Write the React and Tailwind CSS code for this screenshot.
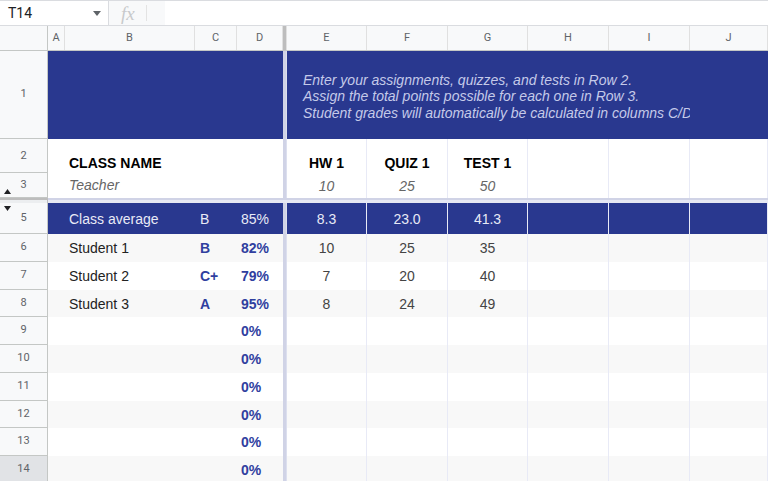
import React from "react";

const cols = "grid grid-cols-[48px_17px_130px_42px_46px_4px_80px_81px_80px_81px_81px_78px]";
const letters = ["A", "B", "C", "D", "", "E", "F", "G", "H", "I", "J"];

const students = [
    { num: 6, h: "h-[28px]", band: true, name: "Student 1", grade: "B", pct: "82%", hw: "10", quiz: "25", test: "35" },
    { num: 7, h: "h-[28px]", band: false, name: "Student 2", grade: "C+", pct: "79%", hw: "7", quiz: "20", test: "40" },
    { num: 8, h: "h-[27px]", band: true, name: "Student 3", grade: "A", pct: "95%", hw: "8", quiz: "24", test: "49" },
    { num: 9, h: "h-[28px]", band: false, name: "", grade: "", pct: "0%" },
    { num: 10, h: "h-[28px]", band: true, name: "", grade: "", pct: "0%" },
    { num: 11, h: "h-[28px]", band: false, name: "", grade: "", pct: "0%" },
    { num: 12, h: "h-[27px]", band: true, name: "", grade: "", pct: "0%" },
    { num: 13, h: "h-[28px]", band: false, name: "", grade: "", pct: "0%" },
    { num: 14, h: "h-[28px]", band: true, name: "", grade: "", pct: "0%", selected: true },
];

function RowHead({ children, selected, extra = "" }) {
    return (
        <div
            className={`relative flex items-center justify-center border-r border-b border-[#c4c7c5] text-[11px] text-[#5f6368] font-['Roboto',sans-serif] ${selected ? "bg-[#e1e3e6]" : "bg-[#f8f9fa]"} ${extra}`}
        >
            {children}
        </div>
    );
}

function Freeze() {
    return <div className="border-l-[3px] border-[#d0d3e6] bg-[#dcdfee]" />;
}

function GridCell({ children, className = "" }) {
    return (
        <div className={`flex items-center justify-center border-r border-[#e8eaf6] pt-px ${className}`}>
            {children}
        </div>
    );
}

function App() {
    return (
        <div className="w-[768px] h-[481px] overflow-hidden bg-white font-['Liberation_Sans',Arial,sans-serif]">
            {/* name box + formula bar */}
            <div className="flex h-[26px] items-center border-t border-b border-[#dadce0]">
                <div className="flex w-[108px] items-center justify-between pl-2 pr-[7px]">
                    <span className="text-[14px] text-[#202124] font-['Roboto',sans-serif]">T14</span>
                    <svg width="8" height="5" viewBox="0 0 8 5">
                        <polygon points="0,0 8,0 4,5" fill="#5f6368" />
                    </svg>
                </div>
                <div className="flex h-[24px] w-[57px] items-center border-l border-[#dadce0] bg-[#f8f9fa]">
                    <span className="ml-[12px] font-['Liberation_Serif',serif] text-[19px] italic leading-none text-[#c8cacc]">fx</span>
                    <div className="ml-[11px] h-[16px] w-px bg-[#e3e3e3]" />
                </div>
            </div>

            {/* column letters */}
            <div className={`${cols} h-[25px] border-b border-[#c4c7c5] bg-[#f8f9fa] text-[11px] text-[#5f6368] font-['Roboto',sans-serif]`}>
                <div className="border-r border-[#c4c7c5]" />
                {letters.map((l, i) =>
                    i === 4 ? (
                        <div key={i} className="border-r border-[#e0e0e0] bg-[#bdbdbd]" />
                    ) : (
                        <div key={i} className="flex items-center justify-center border-r border-[#e0e0e0]">
                            {l}
                        </div>
                    )
                )}
            </div>

            {/* row 1 */}
            <div className={`${cols} h-[88px]`}>
                <RowHead>1</RowHead>
                <div className="col-span-4 bg-[#29388f]" />
                <Freeze />
                <div className="col-span-5 flex flex-col justify-center overflow-hidden whitespace-nowrap bg-[#29388f] pl-4 pt-[3px] text-[14px] italic leading-[16.5px] text-[#c5cae9]">
                    <span>Enter your assignments, quizzes, and tests in Row 2.</span>
                    <span>Assign the total points possible for each one in Row 3.</span>
                    <span>Student grades will automatically be calculated in columns C/D.</span>
                </div>
                <div className="bg-[#29388f]" />
            </div>

            {/* row 2 */}
            <div className={`${cols} h-[34px] text-[14px] leading-[16px]`}>
                <RowHead>2</RowHead>
                <div />
                <div className="col-span-3 flex items-end pb-[2px] pl-1 font-bold text-[#000]">CLASS NAME</div>
                <Freeze />
                <GridCell className="items-end pb-[2px] font-bold text-black">HW 1</GridCell>
                <GridCell className="items-end pb-[2px] font-bold text-black">QUIZ 1</GridCell>
                <GridCell className="items-end pb-[2px] font-bold text-black">TEST 1</GridCell>
                <GridCell />
                <GridCell />
                <GridCell />
            </div>

            {/* row 3 */}
            <div className={`${cols} h-[25px]`}>
                <RowHead>
                    <svg className="absolute left-[4px] top-[16px]" width="7" height="5" viewBox="0 0 7 5">
                        <polygon points="0,5 7,5 3.5,0" fill="#202124" />
                    </svg>
                    3
                </RowHead>
                <div />
                <div className="col-span-3 flex items-center pl-1 text-[14px] italic text-[#666]">Teacher</div>
                <Freeze />
                <GridCell className="text-[14px] italic text-[#666]">10</GridCell>
                <GridCell className="text-[14px] italic text-[#666]">25</GridCell>
                <GridCell className="text-[14px] italic text-[#666]">50</GridCell>
                <GridCell />
                <GridCell />
                <GridCell />
            </div>

            {/* hidden row 4 / freeze line */}
            <div className={`${cols} h-[5px]`}>
                <div className="border-t-[2px] border-r border-[#bdbdbd] bg-[#eceef0]" />
                <div className="col-span-11 border-t-[2px] border-[#d0d3e6] bg-[#e6e8f3]" />
            </div>

            {/* row 5 */}
            <div className={`${cols} h-[31px] text-[14px] text-[#e8eaf6]`}>
                <RowHead>
                    <svg className="absolute left-[4px] top-[3px]" width="7" height="5" viewBox="0 0 7 5">
                        <polygon points="0,0 7,0 3.5,5" fill="#202124" />
                    </svg>
                    5
                </RowHead>
                <div className="bg-[#29388f]" />
                <div className="flex items-center bg-[#29388f] pl-1 pt-px">Class average</div>
                <div className="flex items-center bg-[#29388f] pl-[5px] pt-px">B</div>
                <div className="flex items-center bg-[#29388f] pl-1 pt-px">85%</div>
                <Freeze />
                <GridCell className="border-[#1f2c78] bg-[#29388f]">8.3</GridCell>
                <GridCell className="border-[#1f2c78] bg-[#29388f]">23.0</GridCell>
                <GridCell className="border-[#1f2c78] bg-[#29388f]">41.3</GridCell>
                <GridCell className="border-[#1f2c78] bg-[#29388f]" />
                <GridCell className="border-[#1f2c78] bg-[#29388f]" />
                <GridCell className="border-[#1f2c78] bg-[#29388f]" />
            </div>

            {/* students */}
            {students.map((s) => {
                const bg = s.band ? "bg-[#f8f8f8]" : "bg-white";
                return (
                    <div key={s.num} className={`${cols} ${s.h} text-[14px]`}>
                        <RowHead selected={s.selected}>{s.num}</RowHead>
                        <div className={bg} />
                        <div className={`flex items-center pl-1 pt-px text-[#222] ${bg}`}>{s.name}</div>
                        <div className={`flex items-center pl-[5px] pt-px font-bold text-[#303f9f] ${bg}`}>{s.grade}</div>
                        <div className={`flex items-center pl-1 pt-px font-bold text-[#303f9f] ${bg}`}>{s.pct}</div>
                        <Freeze />
                        <GridCell className={`text-[#444] ${bg}`}>{s.hw}</GridCell>
                        <GridCell className={`text-[#444] ${bg}`}>{s.quiz}</GridCell>
                        <GridCell className={`text-[#444] ${bg}`}>{s.test}</GridCell>
                        <GridCell className={bg} />
                        <GridCell className={bg} />
                        <GridCell className={bg} />
                    </div>
                );
            })}
        </div>
    );
}

export default App;
